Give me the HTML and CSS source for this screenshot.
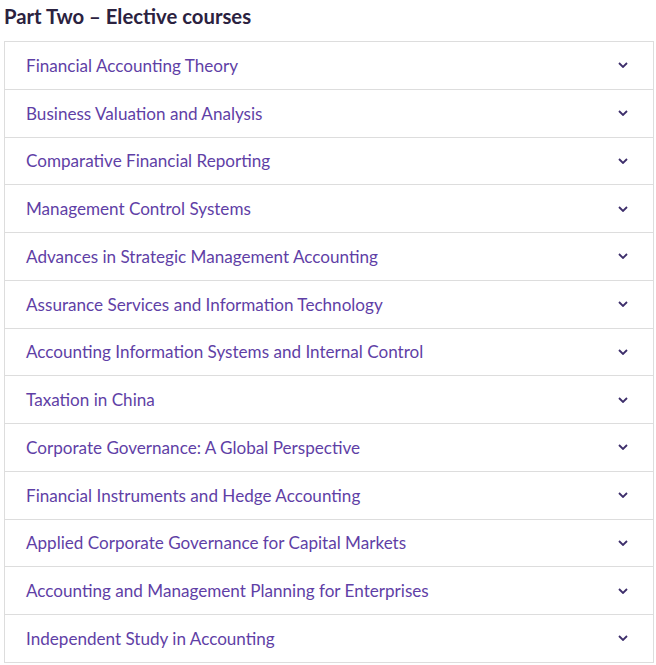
FILE: index.html
```html
<!DOCTYPE html>
<html>
<head>
<meta charset="utf-8">
<link rel="stylesheet" href="styles.css">
</head>
<body>
<h2 class="title">Part Two – Elective courses</h2>
<div class="accordion">
  <div class="row"><span class="label">Financial Accounting Theory</span><svg class="chev" viewBox="0 0 10 6"><path d="M1 1l4 4 4-4"/></svg></div>
  <div class="row"><span class="label">Business Valuation and Analysis</span><svg class="chev" viewBox="0 0 10 6"><path d="M1 1l4 4 4-4"/></svg></div>
  <div class="row"><span class="label">Comparative Financial Reporting</span><svg class="chev" viewBox="0 0 10 6"><path d="M1 1l4 4 4-4"/></svg></div>
  <div class="row"><span class="label">Management Control Systems</span><svg class="chev" viewBox="0 0 10 6"><path d="M1 1l4 4 4-4"/></svg></div>
  <div class="row"><span class="label">Advances in Strategic Management Accounting</span><svg class="chev" viewBox="0 0 10 6"><path d="M1 1l4 4 4-4"/></svg></div>
  <div class="row"><span class="label">Assurance Services and Information Technology</span><svg class="chev" viewBox="0 0 10 6"><path d="M1 1l4 4 4-4"/></svg></div>
  <div class="row"><span class="label">Accounting Information Systems and Internal Control</span><svg class="chev" viewBox="0 0 10 6"><path d="M1 1l4 4 4-4"/></svg></div>
  <div class="row"><span class="label">Taxation in China</span><svg class="chev" viewBox="0 0 10 6"><path d="M1 1l4 4 4-4"/></svg></div>
  <div class="row"><span class="label">Corporate Governance: A Global Perspective</span><svg class="chev" viewBox="0 0 10 6"><path d="M1 1l4 4 4-4"/></svg></div>
  <div class="row"><span class="label">Financial Instruments and Hedge Accounting</span><svg class="chev" viewBox="0 0 10 6"><path d="M1 1l4 4 4-4"/></svg></div>
  <div class="row"><span class="label">Applied Corporate Governance for Capital Markets</span><svg class="chev" viewBox="0 0 10 6"><path d="M1 1l4 4 4-4"/></svg></div>
  <div class="row"><span class="label">Accounting and Management Planning for Enterprises</span><svg class="chev" viewBox="0 0 10 6"><path d="M1 1l4 4 4-4"/></svg></div>
  <div class="row"><span class="label">Independent Study in Accounting</span><svg class="chev" viewBox="0 0 10 6"><path d="M1 1l4 4 4-4"/></svg></div>
</div>
</body>
</html>
```
FILE: styles.css
```css
html, body {
  margin: 0;
  padding: 0;
  background: #ffffff;
}
body {
  padding: 0 2px 0 4px;
  font-family: "Lato", "Open Sans", sans-serif;
}
.title {
  margin: 0;
  height: 41px;
  padding-top: 3px;
  box-sizing: border-box;
  font-size: 20.3px;
  line-height: 26px;
  font-weight: 700;
  color: #2b2240;
}
.accordion {
  border: 1px solid #dddddd;
  border-bottom: none;
}
.row {
  box-sizing: border-box;
  height: 47.75px;
  border-bottom: 1px solid #dddddd;
  display: flex;
  align-items: center;
  justify-content: space-between;
  padding: 0 25px 0 21px;
}
.label {
  font-size: 17.1px;
  color: #5f3fa6;
}
.chev {
  width: 10px;
  height: 6px;
  fill: none;
  stroke: #3d2e6b;
  stroke-width: 1.8;
}
```
